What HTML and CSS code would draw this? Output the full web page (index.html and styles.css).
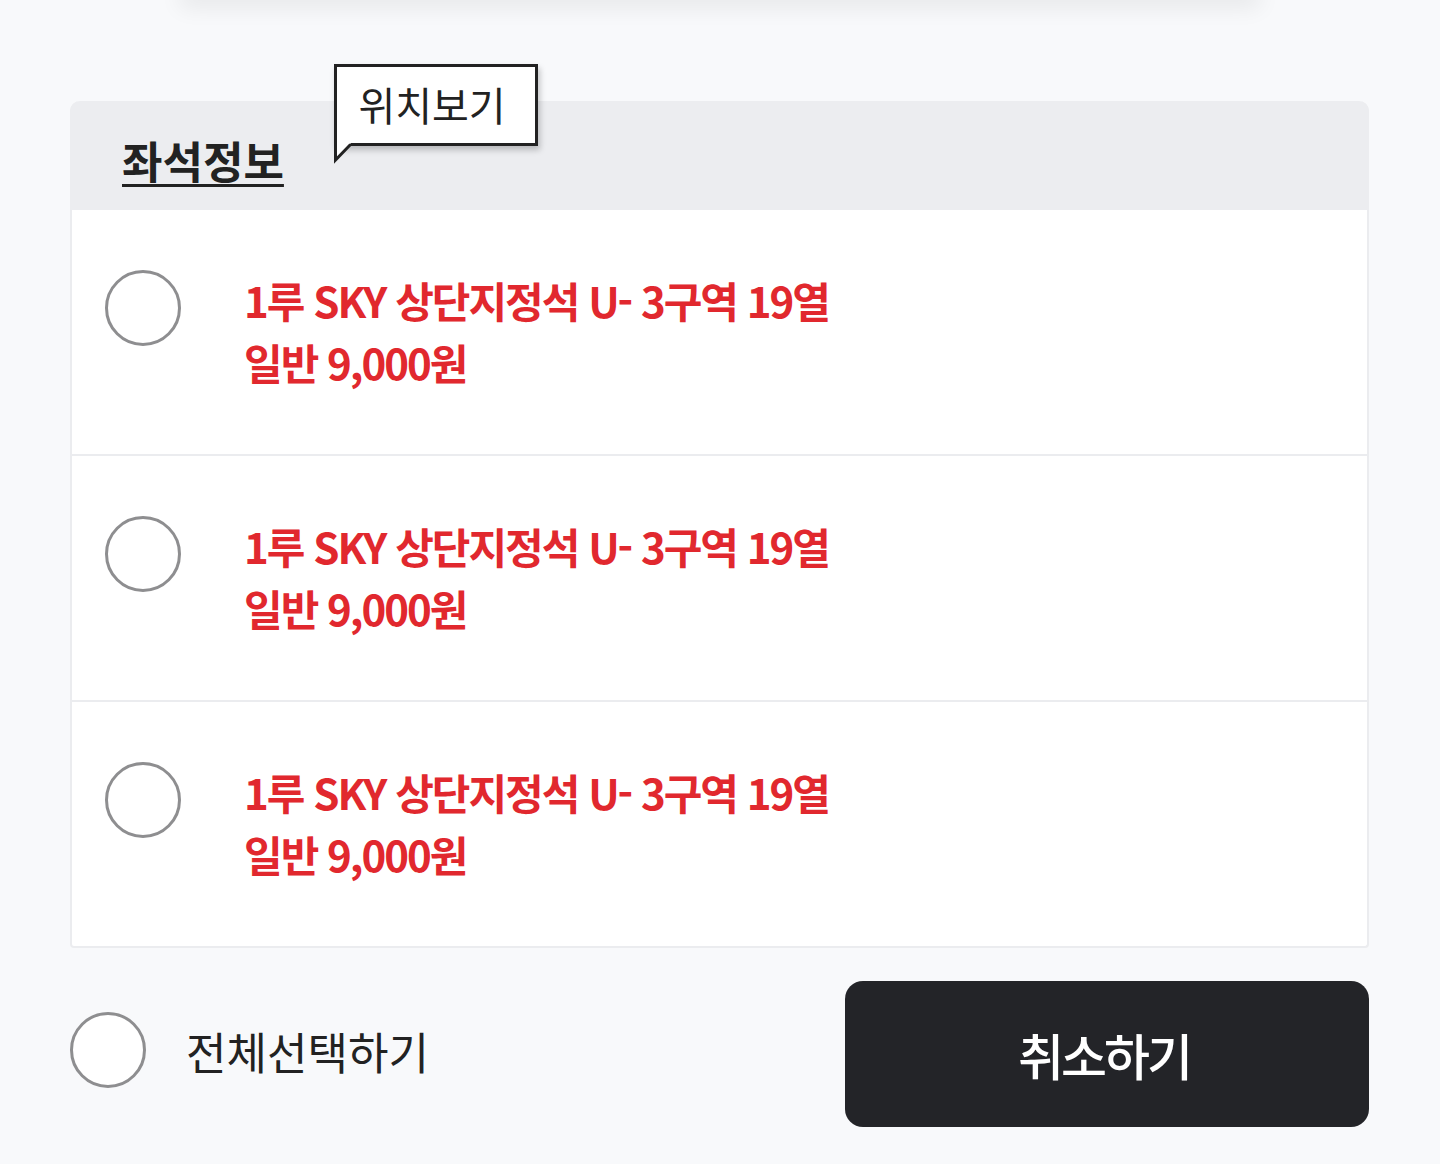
FILE: index.html
```html
<!DOCTYPE html>
<html lang="ko">
<head>
<meta charset="utf-8">
<link rel="stylesheet" href="styles.css">
</head>
<body>
<div class="top-shadow"></div>
<main class="page">
  <section class="card">
    <header class="card-head">
      <h2 class="card-title">좌석정보</h2>
      <div class="tooltip">
        <span class="tooltip-text">위치보기</span>
        <svg class="tooltip-tail" width="20" height="20" viewBox="0 0 20 20">
          <polygon points="3,0 17,0 3,14" fill="#fff"/>
          <polyline points="1.5,0 1.5,17 16.5,1.5" fill="none" stroke="#222" stroke-width="3" stroke-linejoin="miter"/>
        </svg>
      </div>
    </header>
    <ul class="seat-list">
      <li class="seat-row">
        <span class="radio"></span>
        <div class="seat-info">
          <p class="seat-line">1루 SKY 상단지정석 U- 3구역 19열</p>
          <p class="seat-line">일반 9,000원</p>
        </div>
      </li>
      <li class="seat-row">
        <span class="radio"></span>
        <div class="seat-info">
          <p class="seat-line">1루 SKY 상단지정석 U- 3구역 19열</p>
          <p class="seat-line">일반 9,000원</p>
        </div>
      </li>
      <li class="seat-row">
        <span class="radio"></span>
        <div class="seat-info">
          <p class="seat-line">1루 SKY 상단지정석 U- 3구역 19열</p>
          <p class="seat-line">일반 9,000원</p>
        </div>
      </li>
    </ul>
  </section>
  <footer class="actions">
    <label class="select-all">
      <span class="radio"></span>
      <span class="select-all-text">전체선택하기</span>
    </label>
    <button class="cancel-btn" type="button">취소하기</button>
  </footer>
</main>
</body>
</html>
```

FILE: styles.css
```css
* { box-sizing: border-box; }
html, body {
  margin: 0;
  padding: 0;
}
body {
  background: #f8f9fb;
  font-family: "Noto Sans CJK KR", "Noto Sans", sans-serif;
  color: #222;
  width: 1440px;
  height: 1164px;
  overflow: hidden;
}
.top-shadow {
  width: 1080px;
  height: 24px;
  margin: -24px 0 0 180px;
  background: #f0f1f3;
  box-shadow: 0 8px 22px rgba(0, 0, 0, 0.07);
}
.page {
  padding: 101px 71px 0 70px;
}
.card {
  background: #fff;
  border: 2px solid #ebecef;
  border-top: none;
  border-radius: 10px 10px 4px 4px;
}
.card-head {
  position: relative;
  height: 109px;
  background: #ecedf0;
  border-radius: 10px 10px 0 0;
  margin: 0 -2px;
  display: flex;
  align-items: center;
  padding: 8px 0 0 52px;
}
.card-title {
  margin: 0;
  font-size: 44px;
  font-weight: 700;
  letter-spacing: 0;
  line-height: 1;
  color: #222;
  text-decoration: underline;
  text-decoration-thickness: 3px;
  text-underline-offset: 5px;
}
.tooltip {
  position: absolute;
  left: 264px;
  top: -37px;
  width: 204px;
  height: 82px;
  background: #fff;
  border: 3px solid #222;
  box-shadow: 2px 4px 6px rgba(0, 0, 0, 0.22);
  display: flex;
  align-items: center;
  justify-content: center;
  padding-right: 8px;
}
.tooltip-text {
  font-size: 40px;
  font-weight: 400;
  letter-spacing: 0;
  line-height: 1;
  color: #222;
  margin-top: -2px;
}
.tooltip-tail {
  position: absolute;
  left: -3px;
  top: 100%;
  overflow: visible;
}
.seat-list {
  list-style: none;
  margin: 0;
  padding: 0;
}
.seat-row {
  height: 246px;
  display: flex;
  align-items: flex-start;
  gap: 65px;
  padding: 60px 0 0 33px;
  border-bottom: 2px solid #ebecef;
}
.seat-row:last-child {
  height: 244px;
  border-bottom: none;
}
.radio {
  flex: none;
  width: 76px;
  height: 76px;
  border: 3px solid #8e8e90;
  border-radius: 50%;
  background: #fff;
}
.seat-info {
  margin-left: -2px;
  margin-top: -1px;
}
.seat-line {
  margin: 0;
  font-size: 42px;
  font-weight: 700;
  line-height: 62px;
  letter-spacing: -2px;
  color: #e1282e;
}
.actions {
  margin-top: 33px;
  display: flex;
  align-items: center;
  justify-content: space-between;
}
.select-all {
  display: flex;
  align-items: center;
  gap: 40px;
  margin-top: -8px;
}
.select-all-text {
  font-size: 44px;
  font-weight: 400;
  letter-spacing: 0;
  color: #222;
  line-height: 1;
  margin-top: 2px;
}
.cancel-btn {
  width: 524px;
  height: 146px;
  border: none;
  border-radius: 18px;
  background: #232428;
  color: #fff;
  font-family: "Noto Sans CJK KR", "Noto Sans", sans-serif;
  font-size: 50px;
  font-weight: 500;
  letter-spacing: -3px;
  padding: 0 6px 0 0;
  line-height: 1;
}
```
